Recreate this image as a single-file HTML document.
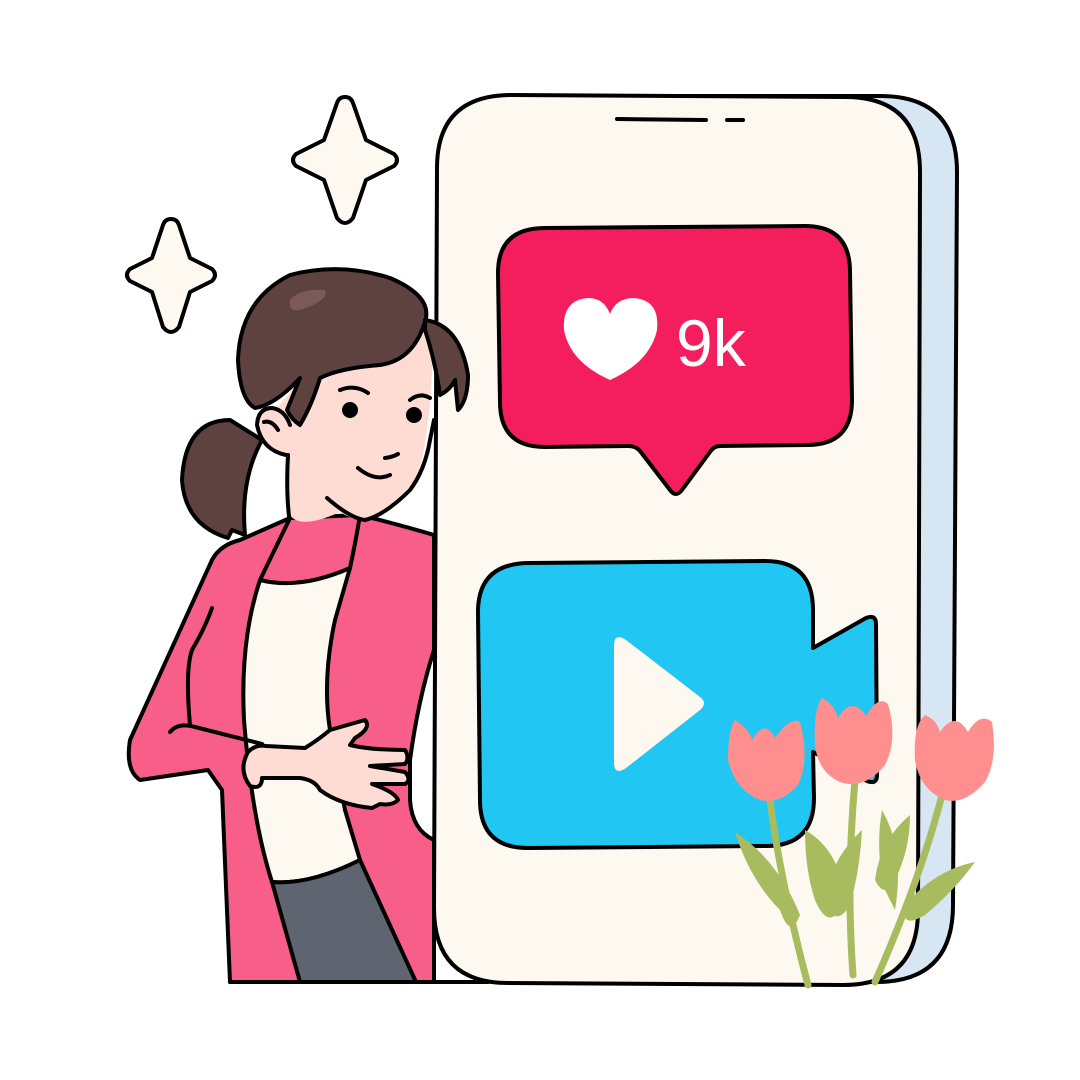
<!DOCTYPE html>
<html><head><meta charset="utf-8"><style>html,body{margin:0;padding:0;background:#fff}svg{display:block}</style></head>
<body>
<svg width="1080" height="1080" viewBox="0 0 1080 1080" xmlns="http://www.w3.org/2000/svg" stroke="#000" stroke-width="4" stroke-linejoin="round" stroke-linecap="round">
<rect width="1080" height="1080" fill="#fff" stroke="none"/>
<path d="M345,97 Q351,97 353,103 L366,140 L394,154 Q400,160 394,166 L366,180 L353,218 Q345,228 337,218 L324,180 L296,166 Q290,160 296,154 L324,140 L337,103 Q339,97 345,97Z" fill="#FDF8F0"/>
<path d="M171,219 Q177,219 179,225 L190,258 L212,269 Q218,275 212,281 L190,292 L179,327 Q171,337 163,327 L152,292 L130,281 Q124,275 130,269 L152,258 L163,225 Q165,219 171,219Z" fill="#FDF8F0"/>
<path d="M555,96 L880,96 Q957,96 957,172 L953,905 Q953,982 876,982 L560,982Z" fill="#D6E7F3"/>
<path d="M512,95 L845,97 Q920,97 920,172 L918,910 Q918,985 843,985 L508,983 Q434,983 434,908 L437,168 Q437,95 512,95Z" fill="#FDF8F0"/>
<path d="M617,119 L706,120 M727,120 L743,120" fill="none"/>
<path d="M545,228 L805,226 Q850,226 850,272 L852,400 Q852,445 807,445 L720,446 Q714,446 710,452 L682,490 Q676,498 670,490 L640,451 Q636,446 628,446 L545,447 Q500,447 500,402 L498,273 Q498,228 545,228Z" fill="#F41E5E"/>
<path d="M610,380 Q570,362 564,330 Q562,300 588,298 Q604,298 610,314 Q616,298 634,298 Q660,300 657,330 Q650,362 610,380Z" fill="#fff" stroke="none"/>
<text x="676" y="366" font-family="Liberation Sans, sans-serif" font-size="66" fill="#fff" stroke="none">9k</text>
<path d="M530,563 L765,561 Q813,561 813,610 L813,648 L866,618 Q876,614 876,624 L877,775 Q877,785 867,781 L813,752 L814,798 Q814,846 766,846 L528,848 Q480,848 480,800 L478,612 Q478,563 530,563Z" fill="#22C6F2"/>
<path d="M614,646 Q614,632 626,640 L700,697 Q708,703 700,710 L626,768 Q614,776 614,762Z" fill="#FDF8F0" stroke="none"/>
<path d="M230,982 L222,790 L208,770 L140,780 Q125,770 130,740 L212,560 Q220,545 240,540 L290,518 L360,515 Q400,525 434,535 L434,650 Q418,700 410,760 L410,800 Q412,830 434,840 L434,982Z" fill="#F75E8A"/>
<path d="M260,580 Q300,590 350,568 L335,620 Q322,680 330,730 L345,810 L360,860 Q310,885 272,882 Q252,820 244,720 Q240,640 260,580Z" fill="#FDF8F0"/>
<path d="M272,882 Q310,885 360,860 L416,982 L300,982Z" fill="#5E6470"/>
<path d="M230,982 L488,982" fill="none"/>
<path d="M212,608 Q205,628 192,650 Q185,670 190,725 M170,732 Q178,722 195,727 L262,744 M350,568 Q356,540 360,515 M260,580 L290,518" fill="none"/>
<path d="M250,786 Q238,770 248,752 Q256,744 266,746 L305,748 Q318,740 330,730 L365,720 Q372,728 355,738 L350,745 Q370,750 405,750 Q410,758 405,764 L370,766 L405,772 Q412,780 405,784 L372,784 Q395,792 398,800 Q392,806 380,804 L372,808 Q340,805 320,790 Q315,780 300,778 L262,778 Q262,790 250,786Z" fill="#FEDCD3"/>
<path d="M230,420 Q185,420 182,480 Q185,525 228,538 L232,530 L245,535 Q240,480 262,440Z" fill="#5D4240"/>
<!-- face + neck fill -->
<path d="M288,455 L290,515 Q300,530 340,512 Q355,522 370,518 Q395,505 415,480 Q430,450 434,330 L300,380 L275,410 Q258,408 255,420 Q260,445 286,455Z" fill="#FEDCD3" stroke="none"/>
<path d="M288,455 Q286,490 289,516 M327,498 Q350,518 365,520 Q385,515 410,490 Q425,470 430,440 L434,420" fill="none"/>
<path d="M300,378 Q275,405 255,408 Q240,400 238,360 Q240,300 290,275 Q340,262 390,278 Q430,295 426,318 Q415,360 380,365 Q340,368 320,378 Q312,405 300,425 Q292,420 287,410Z" fill="#5D4240"/>
<path d="M425,320 Q460,325 468,375 Q468,400 458,410 L455,380 Q450,390 440,395 Q435,360 425,330Z" fill="#5D4240"/>
<path d="M290,300 Q300,288 325,290 Q330,300 300,310 Q288,312 290,300Z" fill="#7C5A57" stroke="none"/>
<path d="M286,455 Q262,450 257,425 Q258,408 272,408 Q285,410 290,425" fill="#FEDCD3"/>
<path d="M264,422 Q272,420 278,430" fill="none"/>
<circle cx="350" cy="410" r="6" fill="#000"/><circle cx="414" cy="415" r="6" fill="#000"/>
<path d="M340,390 Q355,384 368,393 M410,400 Q420,392 430,398 M358,468 Q375,482 390,475 M385,458 Q393,457 398,454" fill="none"/>
<g fill="#A8BC5F">
<path d="M770,800 Q780,880 808,985" fill="none" stroke="#A8BC5F" stroke-width="7"/>
<path d="M855,780 Q846,880 853,975" fill="none" stroke="#A8BC5F" stroke-width="7"/>
<path d="M942,795 Q920,880 875,982" fill="none" stroke="#A8BC5F" stroke-width="7"/>
<path d="M735,832 Q778,860 800,915 Q790,940 780,910 Q750,880 735,832Z" stroke="none"/>
<path d="M805,830 Q840,850 845,900 Q830,935 815,900 Q805,870 805,830Z" stroke="none"/>
<path d="M862,830 Q830,860 825,900 Q835,930 850,905 Q860,870 862,830Z" stroke="none"/>
<path d="M882,810 Q905,850 895,910 L885,890 Q875,850 882,810Z" stroke="none"/>
<path d="M910,815 Q880,840 875,880 Q885,900 895,880 Q910,850 910,815Z" stroke="none"/>
<path d="M975,862 Q935,870 905,905 Q900,930 925,915 Q955,890 975,862Z" stroke="none"/>
</g>
<g fill="#FF8E8E" stroke="none">
<path d="M735,720 Q750,730 752,740 Q765,718 775,738 Q790,716 800,722 Q810,760 798,785 Q780,805 760,800 Q735,790 728,760 Q728,730 735,720Z"/>
<path d="M822,698 Q835,705 838,718 Q852,695 866,716 Q878,695 888,704 Q898,740 885,765 Q865,790 840,782 Q818,772 815,745 Q813,710 822,698Z"/>
<path d="M925,715 Q937,720 940,732 Q955,710 968,732 Q980,712 992,722 Q998,760 985,782 Q965,805 945,800 Q920,790 915,760 Q913,725 925,715Z"/>
</g>
</svg>
</body></html>
